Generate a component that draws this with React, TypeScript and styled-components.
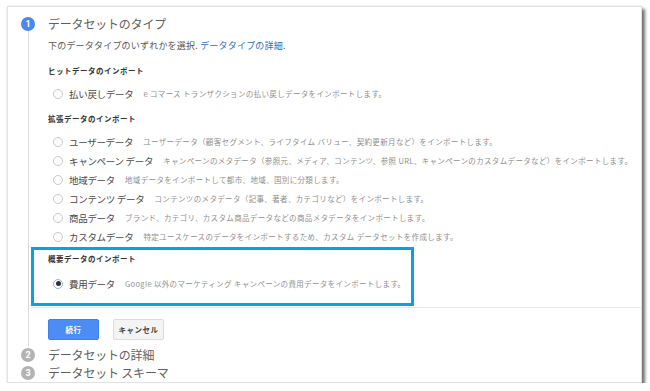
import React from 'react';
import styled, { createGlobalStyle, css } from 'styled-components';

const GlobalStyle = createGlobalStyle`
  html, body {
    margin: 0;
    padding: 0;
    background: #ffffff;
  }
  body {
    font-family: "Noto Sans CJK JP", "Noto Sans", sans-serif;
    color: #444;
  }
`;

// === LAYOUT ===
const Page = styled.div`
  padding: 6px 0 0 7px;
`;

const Card = styled.div`
  box-sizing: border-box;
  width: 635px;
  height: 377px;
  background: #fff;
  border: 1px solid #e2e2e2;
  box-shadow: 3px 3px 3px rgba(0, 0, 0, 0.55), 0 0 2px rgba(0, 0, 0, 0.12);
  padding: 10px 0 0 13px;
  display: flex;
  flex-direction: column;
`;

const StepRow = styled.div<{ $open: boolean }>`
  display: grid;
  grid-template-columns: 14px 1fr;
  column-gap: 13px;
  ${p => p.$open ? css`
    padding-bottom: 6px;
  ` : css`
    height: 19px;
    align-items: center;
  `}
`;

const Marker = styled.div`
  display: flex;
  flex-direction: column;
  align-items: center;
  align-self: stretch;
  justify-content: flex-start;
`;

const MarkerCenter = styled(Marker)`
  justify-content: center;
`;

const Circle = styled.div<{ $active: boolean }>`
  width: 14px;
  height: 14px;
  border-radius: 50%;
  flex: none;
  background: ${p => p.$active ? '#4a87ee' : '#b3b3b3'};
  color: #fff;
  font-family: "Roboto", "Liberation Sans", sans-serif;
  font-weight: 700;
  font-size: 9px;
  line-height: 14px;
  text-align: center;
`;

const Rail = styled.div`
  flex: 1;
  width: 1px;
  background: #d9d9d9;
  margin-bottom: -6px;
`;

const StepBody = styled.div`
  display: flex;
  flex-direction: column;
  align-items: flex-start;
  min-width: 0;
`;

const StepTitle = styled.div`
  font-size: 12px;
  line-height: 14px;
  color: #5f5f5f;
  letter-spacing: -0.2px;
  white-space: nowrap;
`;

const Intro = styled.div`
  margin-top: 9px;
  font-size: 9px;
  line-height: 12px;
  color: #555;
  letter-spacing: 0.2px;
  white-space: nowrap;

  a {
    color: #2f6fba;
    text-decoration: none;
  }
`;

const GroupHeading = styled.div<{ $gap: number }>`
  margin-top: ${p => p.$gap}px;
  font-size: 7.5px;
  line-height: 10px;
  font-weight: 700;
  color: #333;
  letter-spacing: 0.5px;
  white-space: nowrap;
`;

const OptionList = styled.div<{ $gap: number }>`
  margin-top: ${p => p.$gap}px;
  display: flex;
  flex-direction: column;
`;

const Option = styled.label`
  display: flex;
  align-items: center;
  height: 19px;
  padding-left: 5px;
  white-space: nowrap;
`;

const Radio = styled.span<{ $checked: boolean }>`
  box-sizing: border-box;
  width: 10px;
  height: 10px;
  border-radius: 50%;
  flex: none;
  display: flex;
  align-items: center;
  justify-content: center;
  border: 1px solid ${p => p.$checked ? '#8ab4f8' : '#c8c8c8'};
  background: #fff;

  ${p => p.$checked && css`
    &::after {
      content: '';
      width: 5px;
      height: 5px;
      border-radius: 50%;
      background: #333;
    }
  `}
`;

const OptionLabel = styled.span`
  margin-left: 6px;
  font-size: 9.5px;
  color: #484848;
  letter-spacing: -0.3px;
`;

const OptionHint = styled.span`
  margin-left: 10px;
  font-size: 7.5px;
  color: #8f8f8f;
  letter-spacing: 0.35px;
`;

const Highlight = styled.div`
  margin-left: -17px;
  margin-top: 1px;
  width: 383px;
  box-sizing: border-box;
  border: 3px solid #0aa0e6;
  padding: 4px 0 10px 14px;
  display: flex;
  flex-direction: column;
  position: relative;
  z-index: 1;
  background: #fff;
`;

const Divider = styled.div`
  align-self: stretch;
  height: 1px;
  margin-top: 1px;
  margin-left: -17px;
  background: #e6e6e6;
`;

const Actions = styled.div`
  margin-top: 11px;
  display: flex;
  gap: 14px;
`;

const Button = styled.button<{ $primary?: boolean }>`
  box-sizing: border-box;
  width: 51px;
  height: 21px;
  padding: 0;
  border-radius: 2px;
  font-family: "Noto Sans CJK JP", sans-serif;
  font-weight: 700;
  font-size: 7.5px;
  letter-spacing: 0.5px;
  cursor: pointer;
  ${p => p.$primary ? css`
    background: #4c8cf5;
    border: 1px solid #3f7fe6;
    color: #fff;
  ` : css`
    background: #f4f4f4;
    border: 1px solid #dcdcdc;
    color: #444;
  `}
`;

// === DATA ===
type Item = { label: string; hint: string; checked?: boolean };

const hitItems: Item[] = [
  { label: '払い戻しデータ', hint: 'e コマース トランザクションの払い戻しデータをインポートします。' },
];

const extItems: Item[] = [
  { label: 'ユーザーデータ', hint: 'ユーザーデータ（顧客セグメント、ライフタイム バリュー、契約更新月など）をインポートします。' },
  { label: 'キャンペーン データ', hint: 'キャンペーンのメタデータ（参照元、メディア、コンテンツ、参照 URL、キャンペーンのカスタムデータなど）をインポートします。' },
  { label: '地域データ', hint: '地域データをインポートして都市、地域、国別に分類します。' },
  { label: 'コンテンツ データ', hint: 'コンテンツのメタデータ（記事、著者、カテゴリなど）をインポートします。' },
  { label: '商品データ', hint: 'ブランド、カテゴリ、カスタム商品データなどの商品メタデータをインポートします。' },
  { label: 'カスタムデータ', hint: '特定ユースケースのデータをインポートするため、カスタム データセットを作成します。' },
];

const summaryItems: Item[] = [
  { label: '費用データ', hint: 'Google 以外のマーケティング キャンペーンの費用データをインポートします。', checked: true },
];

const Options: React.FC<{ items: Item[]; gap: number }> = ({ items, gap }) => (
  <OptionList $gap={gap}>
    {items.map(item => (
      <Option key={item.label}>
        <Radio $checked={!!item.checked} />
        <OptionLabel>{item.label}</OptionLabel>
        <OptionHint>{item.hint}</OptionHint>
      </Option>
    ))}
  </OptionList>
);

const ClosedStep: React.FC<{ n: number; title: string }> = ({ n, title }) => (
  <StepRow $open={false}>
    <MarkerCenter>
      <Circle $active={false}>{n}</Circle>
    </MarkerCenter>
    <StepTitle>{title}</StepTitle>
  </StepRow>
);

// === COMPONENT ===
const App: React.FC = () => {
  return (
    <Page>
      <GlobalStyle />
      <Card>
        <StepRow $open>
          <Marker>
            <Circle $active>1</Circle>
            <Rail />
          </Marker>
          <StepBody>
            <StepTitle>データセットのタイプ</StepTitle>
            <Intro>
              下のデータタイプのいずれかを選択. <a href="#">データタイプの詳細</a>.
            </Intro>

            <GroupHeading $gap={14}>ヒットデータのインポート</GroupHeading>
            <Options items={hitItems} gap={8} />

            <GroupHeading $gap={11}>拡張データのインポート</GroupHeading>
            <Options items={extItems} gap={8} />

            <Highlight>
              <GroupHeading $gap={0}>概要データのインポート</GroupHeading>
              <Options items={summaryItems} gap={10} />
            </Highlight>
            <Divider />

            <Actions>
              <Button $primary>続行</Button>
              <Button>キャンセル</Button>
            </Actions>
          </StepBody>
        </StepRow>
        <ClosedStep n={2} title="データセットの詳細" />
        <ClosedStep n={3} title="データセット スキーマ" />
      </Card>
    </Page>
  );
};

export default App;
